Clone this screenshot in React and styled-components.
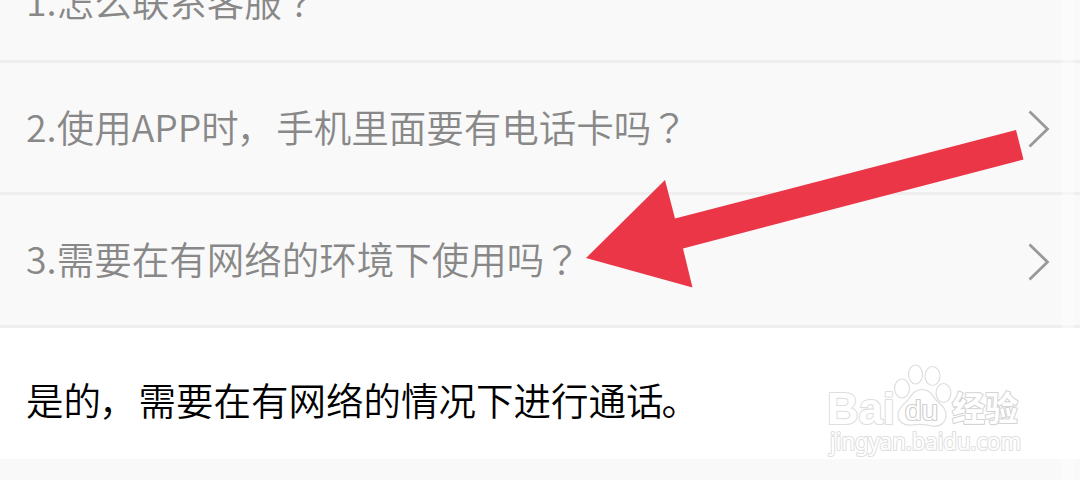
import styled, { createGlobalStyle } from "styled-components";

const questions = [
    { id: 1, parts: ["1.怎么联系客服"], height: 63, bottom: 32 },
    { id: 2, parts: ["2.使用APP时", "手机里面要有电话卡吗"], height: 132, bottom: 38, arrow: true },
    { id: 3, parts: ["3.需要在有网络的环境下使用吗"], height: 133, bottom: 39, arrow: true },
];

export default function App() {
    return (
        <>
            <GlobalStyle />
            <Page>
                {questions.map(({ id, parts, height, bottom, arrow }) => (
                    <QuestionRow key={id} $height={height}>
                        <Question $bottom={bottom}>
                            {parts[0]}
                            {parts[1] && <Comma>，</Comma>}
                            {parts[1]}
                            <QuestionMark>？</QuestionMark>
                        </Question>
                        {arrow && <Chevron />}
                    </QuestionRow>
                ))}
                <Answer>
                    <p>是的<Comma>，</Comma>需要在有网络的情况下进行通话<Stop>。</Stop></p>
                </Answer>
                <ScrollTrack />
                <PointerArrow />
                <Watermark />
            </Page>
        </>
    );
}

function Chevron() {
    return (
        <ChevronIcon width="22" height="40" viewBox="0 0 22 40">
            <path d="M1.5 2.5 L19.5 20 L1.5 37.5" fill="none" stroke="#999999" strokeWidth="2.8" />
        </ChevronIcon>
    );
}

function PointerArrow() {
    return (
        <Overlay viewBox="0 0 1080 480">
            <polygon
                points="586,258 665,180 675,218.5 1016,130 1023.5,159.5 683,248.5 692.5,287.5"
                fill="#eb3648"
            />
        </Overlay>
    );
}

function Watermark() {
    return (
        <Overlay viewBox="0 0 1080 480">
            <g fill="#ffffff" stroke="#dedede" strokeWidth="1.2">
                <ellipse cx="902" cy="388.5" rx="7.5" ry="9.5" />
                <ellipse cx="915.5" cy="374.5" rx="7" ry="9.5" />
                <ellipse cx="932.5" cy="376" rx="7.5" ry="9.5" />
                <ellipse cx="943.5" cy="393" rx="7.5" ry="9.5" />
                <path d="M922 389.5 C929 389.5 932 394 936 400 C941 405 947 409 946 416 C945 424 939 427 932 426 C925 424 919 424 912 425 C904 426 898 422 898 415 C898 408 904 404 908 400 C912 394 915 389.5 922 389.5 Z" />
            </g>
            <Brand x="827" y="424" textLength="68" lengthAdjust="spacingAndGlyphs">Bai</Brand>
            <BrandSmall x="905" y="419.5" textLength="33" lengthAdjust="spacingAndGlyphs">du</BrandSmall>
            <BrandChinese x="952" y="421" textLength="66" lengthAdjust="spacingAndGlyphs">经验</BrandChinese>
            <Domain x="830" y="450" textLength="191" lengthAdjust="spacingAndGlyphs">jingyan.baidu.com</Domain>
        </Overlay>
    );
}

/* Styled Components */
const GlobalStyle = createGlobalStyle`
    * {
        box-sizing: border-box;
    }

    body {
        margin: 0;
        background: #f9f9f9;
    }

    p {
        margin: 0;
    }
`;

const Page = styled.main`
    position: relative;
    width: 1080px;
    height: 480px;
    overflow: hidden;
    background: #f9f9f9;
    font-family: "Noto Sans CJK SC", sans-serif;
    font-size: 37.5px;
    font-weight: 350;
    line-height: 56px;
`;

const QuestionRow = styled.div`
    display: flex;
    align-items: flex-end;
    justify-content: space-between;
    height: ${(props) => props.$height}px;
    padding: 0 30px 0 26px;
    border-bottom: 3px solid #eeeeee;
`;

const Question = styled.p`
    padding-bottom: ${(props) => props.$bottom}px;
    color: #888888;
    white-space: nowrap;
`;

const Comma = styled.span`
    margin-left: -2px;
    margin-right: 2px;
`;

const Stop = styled.span`
    margin-left: -2px;
`;

const QuestionMark = styled.span`
    margin-left: -1px;
    font-family: "Noto Sans CJK JP", sans-serif;
`;

const ChevronIcon = styled.svg`
    flex: none;
    margin-bottom: 43px;
`;

const Answer = styled.div`
    display: flex;
    align-items: center;
    height: 131px;
    padding: 10px 26px 0;
    background: #ffffff;
    color: #000000;
    white-space: nowrap;
`;

const ScrollTrack = styled.div`
    position: absolute;
    top: 0;
    right: 6px;
    width: 12px;
    height: 100%;
    background: rgba(255, 255, 255, 0.4);
`;

const Overlay = styled.svg`
    position: absolute;
    inset: 0;
    width: 1080px;
    height: 480px;
    pointer-events: none;
`;

const OutlinedText = styled.text`
    fill: #ffffff;
    stroke: #dedede;
    stroke-width: 2.2;
    stroke-linejoin: round;
    paint-order: stroke;
`;

const Brand = styled(OutlinedText)`
    font-family: "Liberation Sans", Arial, sans-serif;
    font-size: 45px;
    font-weight: 700;
`;

const BrandSmall = styled(OutlinedText)`
    font-family: "Liberation Sans", Arial, sans-serif;
    font-size: 27px;
    font-weight: 400;
    stroke: #cfcfcf;
`;

const BrandChinese = styled(OutlinedText)`
    font-family: "Noto Sans CJK SC", sans-serif;
    font-size: 34px;
    font-weight: 700;
    stroke: #d4d4d4;
`;

const Domain = styled(OutlinedText)`
    font-family: "Noto Sans", sans-serif;
    font-size: 23px;
    font-weight: 400;
    stroke: #e0e0e0;
`;
